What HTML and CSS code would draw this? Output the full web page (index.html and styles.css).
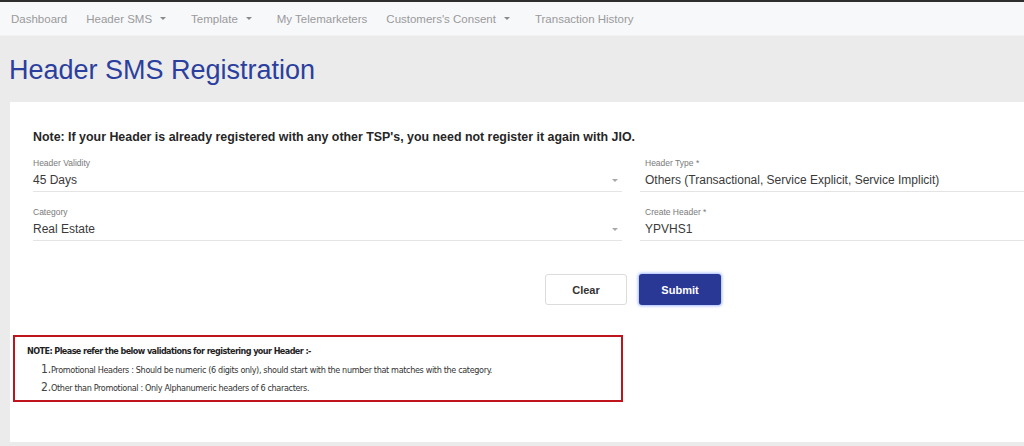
FILE: index.html
```html
<!DOCTYPE html>
<html lang="en">

<head>
    <meta charset="UTF-8">
    <meta name="viewport" content="width=device-width, initial-scale=1.0">
    <title>Header SMS Registration</title>
    <link rel="stylesheet" href="styles.css">
</head>

<body>
    <div class="top-line"></div>
    <div class="nav">
        <span class="nav-item">Dashboard</span>
        <span class="nav-item">Header SMS<i class="caret"></i></span>
        <span class="nav-item">Template<i class="caret"></i></span>
        <span class="nav-item">My Telemarketers</span>
        <span class="nav-item">Customers's Consent<i class="caret"></i></span>
        <span class="nav-item">Transaction History</span>
    </div>

    <div class="page">
        <h1 class="page-title">Header SMS Registration</h1>

        <div class="card">
            <div class="form">
                <div class="form-note">Note: If your Header is already registered with any other TSP's, you need not register it again with JIO.</div>

                <div class="form-grid">
                    <div class="field">
                        <div class="field-label">Header Validity</div>
                        <div class="field-value">45 Days<i class="select-caret"></i></div>
                    </div>
                    <div class="field field-right">
                        <div class="field-label">Header Type *</div>
                        <div class="field-value">Others (Transactional, Service Explicit, Service Implicit)</div>
                    </div>
                    <div class="field">
                        <div class="field-label">Category</div>
                        <div class="field-value">Real Estate<i class="select-caret"></i></div>
                    </div>
                    <div class="field field-right">
                        <div class="field-label">Create Header *</div>
                        <div class="field-value">YPVHS1</div>
                    </div>

                    <div class="btn btn-clear">Clear</div>
                    <div class="btn btn-submit">Submit</div>
                </div>
            </div>

            <div class="rules">
                <div class="rules-title">NOTE: Please refer the below validations for registering your Header :-</div>
                <ol class="rules-list">
                    <li><span class="num">1.</span>Promotional Headers : Should be numeric (6 digits only), should start with the number that matches with the category.</li>
                    <li><span class="num">2.</span>Other than Promotional : Only Alphanumeric headers of 6 characters.</li>
                </ol>
            </div>
        </div>
    </div>
</body>

</html>
```

FILE: styles.css
```css
html,
body {
    margin: 0;
    height: 446px;
    overflow: hidden;
}

body {
    background: #ebebeb;
    font-family: "Liberation Sans", Arial, sans-serif;
    color: #333;
}

.top-line {
    height: 2px;
    background: #2e2e2e;
}

.nav {
    height: 33px;
    background: #f7f8fa;
    border-bottom: 1px solid #f1f2f4;
    display: flex;
    align-items: center;
    padding-left: 11px;
    gap: 19px;
}

.nav .nav-item {
    font-size: 11.5px;
    color: #9a9a9a;
    display: flex;
    align-items: center;
}

.nav .caret {
    display: inline-block;
    margin: 0 6px 0 8px;
    width: 0;
    height: 0;
    border-left: 3px solid transparent;
    border-right: 3px solid transparent;
    border-top: 3px solid #8a8a8a;
}

.page {
    padding-top: 18px;
}

.page-title {
    margin: 0 0 16px 9px;
    font-size: 27px;
    line-height: 32px;
    font-weight: 400;
    color: #2b3f9e;
}

.card {
    background: #fff;
    margin-left: 10px;
    padding: 27px 0 40px 3px;
}

.form {
    padding-left: 20px;
}

.form-note {
    font-size: 12.4px;
    line-height: 16px;
    font-weight: 700;
    color: #262626;
    margin-bottom: 12px;
}

.form-grid {
    display: grid;
    grid-template-columns: 589px 1fr;
    column-gap: 18px;
    row-gap: 14px;
}

.field {
    border-bottom: 1px solid #e4e4e4;
    padding-bottom: 3px;
}

.field-right {
    padding-left: 5px;
}

.field-label {
    font-size: 8.5px;
    line-height: 12px;
    color: #7a7a7a;
    margin-bottom: 3px;
}

.field-value {
    font-size: 12px;
    line-height: 16px;
    color: #3a3a3a;
    display: flex;
    align-items: center;
    justify-content: space-between;
}

.select-caret {
    width: 0;
    height: 0;
    margin-right: 4px;
    border-left: 3px solid transparent;
    border-right: 3px solid transparent;
    border-top: 3px solid #a8a8a8;
}

.btn {
    margin-top: 19px;
    width: 82px;
    height: 31px;
    box-sizing: border-box;
    border-radius: 3px;
    font-size: 11px;
    font-weight: 700;
    display: flex;
    align-items: center;
    justify-content: center;
}

.btn-clear {
    justify-self: end;
    margin-right: -5px;
    border: 1px solid #dcdcdc;
    color: #333;
}

.btn-submit {
    justify-self: start;
    margin-left: -1px;
    background: #2a3895;
    color: #fff;
    box-shadow: 0 0 3px 1px #9fb6ff;
}

.rules {
    margin-top: 30px;
    width: 610px;
    box-sizing: border-box;
    border: 2px solid #c0141d;
    padding: 8px 12px 3px;
    font-family: "DejaVu Sans Condensed", sans-serif;
    color: #333;
}

.rules-title {
    font-size: 9px;
    line-height: 12px;
    font-weight: 700;
    letter-spacing: -0.58px;
    color: #1f1f1f;
}

.rules-list {
    list-style: none;
    margin: 4px 0 0;
    padding-left: 14px;
}

.rules-list li {
    font-size: 9px;
    line-height: 17px;
    letter-spacing: -0.35px;
    display: flex;
    align-items: baseline;
}

.rules-list .num {
    font-size: 12px;
    width: 10px;
    letter-spacing: 0;
    color: #444;
}
```
